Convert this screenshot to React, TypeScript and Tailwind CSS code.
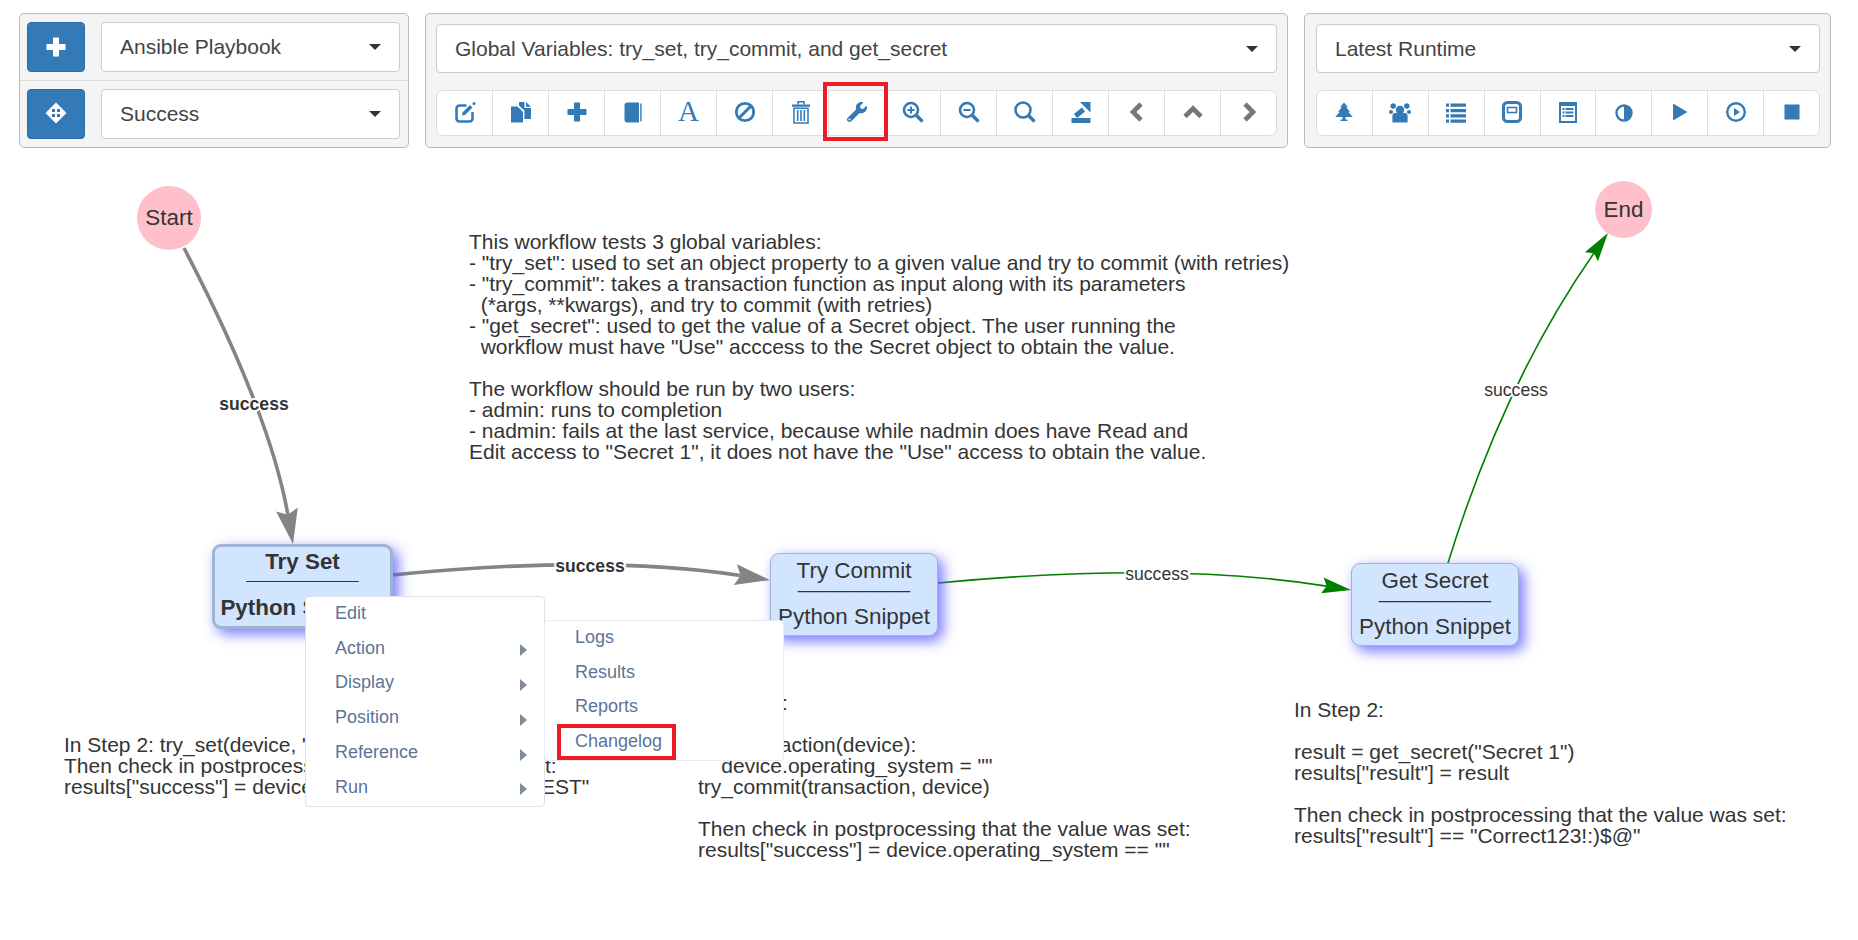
import React from 'react';
import { FaWrench } from 'react-icons/fa';

type Pt = [number, number];

// glyphs drawn by hand, the toolbar font is not available
const Svg: React.FC<{ children: React.ReactNode }> = ({ children }) => (
  <svg width="24" height="24" viewBox="0 0 24 24" fill="currentColor">{children}</svg>
);

const PlusGlyph = () => <Svg><path d="M9 2.5h6V9h6.5v6H15v6.5H9V15H2.5V9H9z" /></Svg>;
const MoveGlyph = () => (
  <Svg>
    <path d="M12 1.5 22.5 12 12 22.5 1.5 12z" />
    <path d="M8 8h3v3H8zM13 8h3v3h-3zM8 13h3v3H8zM13 13h3v3h-3z" fill="#337ab7" />
  </Svg>
);
const EditGlyph = () => (
  <Svg>
    <path d="M13.5 5.5H6.5a3 3 0 0 0-3 3v10a3 3 0 0 0 3 3h10a3 3 0 0 0 3-3v-6.5" fill="none" stroke="currentColor" strokeWidth="2.6" />
    <path d="M9.5 12.5 17 5l2.5 2.5-7.5 7.5-3 .6z" />
    <circle cx="21" cy="3.6" r="1.5" />
  </Svg>
);
const DuplicateGlyph = () => (
  <Svg>
    <path d="M2 6.5h6.5L14 12v10.5H2z" />
    <path d="M10 2h5.5v6H22v11h-6.6v-8.5L10 5.5z" />
    <path d="M17 2l5 4.8h-5z" />
  </Svg>
);
const BookGlyph = () => (
  <Svg>
    <path d="M3.5 5.5c0-2 1-3 3-3h11.5v17.5H3.5z" />
    <path d="M3.5 19.5h14.5v3H6c-1.5 0-2.5-1-2.5-3z" />
    <path d="M19.2 3.5h1.4v18h-1.4z" />
  </Svg>
);
const BanGlyph = () => (
  <Svg>
    <circle cx="12" cy="12" r="8.7" fill="none" stroke="currentColor" strokeWidth="2.8" />
    <path d="M6.5 17.5 17.5 6.5" stroke="currentColor" strokeWidth="3" />
  </Svg>
);
const TrashGlyph = () => (
  <Svg>
    <path d="M3 4.5h18v2.2H3z" />
    <path d="M9 4.5V1.8h6v2.7" fill="none" stroke="currentColor" strokeWidth="1.5" />
    <path d="M5 8.2h14V23H5z" fill="none" stroke="currentColor" strokeWidth="1.5" />
    <path d="M8.7 10v11M12 10v11M15.3 10v11" stroke="currentColor" strokeWidth="1.6" />
  </Svg>
);
const Lens: React.FC<{ r?: number; children?: React.ReactNode }> = ({ r = 7, children }) => (
  <Svg>
    <circle cx="10" cy="10" r={r} fill="none" stroke="currentColor" strokeWidth="2.6" />
    <path d="M15.5 15.5 21.5 21.5" stroke="currentColor" strokeWidth="3.4" />
    {children}
  </Svg>
);
const ImportGlyph = () => (
  <Svg>
    <path d="M2.5 18h19v5h-19z" />
    <path d="M11 2h10.5v10.5z" />
    <path d="M14.5 9.5 6.5 16" stroke="currentColor" strokeWidth="5" />
  </Svg>
);
const Chevron: React.FC<{ d: string }> = ({ d }) => (
  <Svg><path d={d} fill="none" stroke="currentColor" strokeWidth="4.6" /></Svg>
);
const TreeGlyph = () => (
  <Svg><path d="M12 2.5l4 4.7h-1.8l3.8 4.6h-1.8l4.5 5.2h-7.2v2.6h2v1.4H8.5V19.6h2V17H3.3l4.5-5.2H6l3.8-4.6H8z" /></Svg>
);
const GroupGlyph = () => (
  <Svg>
    <circle cx="5.2" cy="6" r="2.7" />
    <circle cx="18.8" cy="6" r="2.7" />
    <circle cx="3" cy="12" r="2.1" />
    <circle cx="21" cy="12" r="2.1" />
    <circle cx="12" cy="10" r="4.2" />
    <path d="M4.4 22v-5.5a3 3 0 0 1 3-3h9.2a3 3 0 0 1 3 3V22a1 1 0 0 1-1 1H5.4a1 1 0 0 1-1-1z" transform="translate(0 -.5)" />
  </Svg>
);
const ListGlyph = () => (
  <Svg>
    <path d="M2 3.5h3v3.2H2zM2 9h3v3.2H2zM2 14.2h3v3.2H2zM2 19.5h3v3.2H2z" />
    <path d="M6.5 3.5H22v3.2H6.5zM6.5 9H22v3.2H6.5zM6.5 14.2H22v3.2H6.5zM6.5 19.5H22v3.2H6.5z" />
  </Svg>
);
const ModalGlyph = () => (
  <Svg>
    <rect x="3.5" y="2.5" width="17" height="19" rx="4" fill="none" stroke="currentColor" strokeWidth="3" />
    <rect x="7.5" y="7.5" width="9" height="5" fill="none" stroke="currentColor" strokeWidth="1.5" />
  </Svg>
);
const ListAltGlyph = () => (
  <Svg>
    <path fillRule="evenodd" d="M3 2h18v21H3zM5 6v15h14V6z" />
    <path d="M6.5 8h2v2h-2zM6.5 11.5h2v2h-2zM6.5 15h2v2h-2zM9.5 8h8v2h-8zM9.5 11.5h8v2h-8zM9.5 15h8v2h-8z" />
  </Svg>
);
const AdjustGlyph = () => (
  <Svg>
    <circle cx="12" cy="13" r="7.5" fill="none" stroke="currentColor" strokeWidth="2.4" />
    <path d="M12 5.5a7.5 7.5 0 0 1 0 15z" />
  </Svg>
);
const PlayCircleGlyph = () => (
  <Svg>
    <circle cx="12" cy="12" r="8.8" fill="none" stroke="currentColor" strokeWidth="2.4" />
    <path d="M10 8l6 4-6 4z" />
  </Svg>
);

const BLUE = 'text-[#337ab7]';
const GRAY = 'text-[#777777]';

const editIcons: [React.ReactNode, string][] = [
  [<EditGlyph />, BLUE],
  [<DuplicateGlyph />, BLUE],
  [<PlusGlyph />, BLUE],
  [<BookGlyph />, BLUE],
  [<span className="font-['Liberation_Serif',serif] text-[29px] leading-none">A</span>, BLUE],
  [<BanGlyph />, BLUE],
  [<TrashGlyph />, BLUE],
  [<FaWrench size={20} />, BLUE],
  [<Lens><path d="M9 6.5h2V9h2.5v2H11v2.5H9V11H6.5V9H9z" /></Lens>, BLUE],
  [<Lens><path d="M6.5 9h7v2h-7z" /></Lens>, BLUE],
  [<Lens r={7.5} />, BLUE],
  [<ImportGlyph />, BLUE],
  [<Chevron d="M16 4 8 12l8 8" />, GRAY],
  [<Chevron d="M4 16.5l8-8 8 8" />, GRAY],
  [<Chevron d="M8 4l8 8-8 8" />, GRAY],
];

const runtimeIcons: React.ReactNode[] = [
  <TreeGlyph />,
  <GroupGlyph />,
  <ListGlyph />,
  <ModalGlyph />,
  <ListAltGlyph />,
  <AdjustGlyph />,
  <Svg><path d="M5 3.5 19.5 12 5 20.5z" /></Svg>,
  <PlayCircleGlyph />,
  <Svg><path d="M4.5 4.5h15v15h-15z" /></Svg>,
];

const Select: React.FC<{ label: string; className: string }> = ({ label, className }) => (
  <div className={`flex items-center justify-between bg-white border border-[#cccccc] rounded-[4px] pl-[18px] pr-[18px] text-[21px] text-[#444444] ${className}`}>
    <span>{label}</span>
    <span className="w-0 h-0 border-x-[6px] border-x-transparent border-t-[6px] border-t-[#333333]" />
  </div>
);

const IconBar: React.FC<{ items: [React.ReactNode, string][] }> = ({ items }) => (
  <div className="flex h-[46px] bg-white border border-[#dddddd] rounded-[7px] overflow-hidden">
    {items.map(([icon, color], i) => (
      <div key={i} className={`flex-1 flex items-center justify-center pb-[3px] ${color} ${i < items.length - 1 ? 'border-r border-[#dddddd]' : ''}`}>
        {icon}
      </div>
    ))}
  </div>
);

const Edge: React.FC<{ from: Pt; ctrl: Pt; to: Pt; color: string; width: number; len: number; wide: number }> = ({ from, ctrl, to, color, width, len, wide }) => {
  const dx = to[0] - ctrl[0];
  const dy = to[1] - ctrl[1];
  const d = Math.hypot(dx, dy);
  const ux = dx / d;
  const uy = dy / d;
  const bx = to[0] - ux * len;
  const by = to[1] - uy * len;
  const nx = to[0] - ux * len * 0.85;
  const ny = to[1] - uy * len * 0.85;
  const head = [
    to,
    [bx - uy * wide, by + ux * wide],
    [nx, ny],
    [bx + uy * wide, by - ux * wide],
  ].map(p => p.join(',')).join(' ');
  return (
    <g>
      <path d={`M${from[0]} ${from[1]} Q${ctrl[0]} ${ctrl[1]} ${nx} ${ny}`} fill="none" stroke={color} strokeWidth={width} />
      <polygon points={head} fill={color} />
    </g>
  );
};

// vis draws edge labels with a white outline, not a filled box
const EdgeLabel: React.FC<{ className: string; bold?: boolean }> = ({ className, bold }) => (
  <span className={`absolute -translate-x-1/2 -translate-y-1/2 text-[17.6px] leading-[18px] text-[#343434] [-webkit-text-stroke:4px_white] [paint-order:stroke_fill] ${bold ? 'font-bold' : ''} ${className}`}>
    success
  </span>
);

const Node: React.FC<{ title: string; className: string; selected?: boolean }> = ({ title, className, selected }) => (
  <div className={`absolute flex flex-col items-center justify-center bg-[#d2e5ff] rounded-[9px] text-[22.4px] text-[#343434] shadow-[5px_5px_14px_rgba(85,85,255,0.8)] ${selected ? 'border-[3px] border-[#9db4d6] font-bold pb-[3px]' : 'border-[1.5px] border-[#9db4d6] pb-[2px]'} ${className}`}>
    <div className="leading-[22px]">{title}</div>
    <div className="leading-[0px] -mt-px h-[25px]">_________</div>
    <div className="leading-[22px] whitespace-nowrap">Python Snippet</div>
  </div>
);

const Circle: React.FC<{ label: string; className: string }> = ({ label, className }) => (
  <div className={`absolute flex items-center justify-center rounded-full bg-[#ffc0cb] text-[22.4px] text-[#343434] ${className}`}>{label}</div>
);

const Note: React.FC<{ text: string; className: string }> = ({ text, className }) => (
  <pre className={`absolute font-['Liberation_Sans',Arial,sans-serif] text-[21px] leading-[21px] text-[#343434] ${className}`}>{text}</pre>
);

const MenuItem: React.FC<{ label: string; pad: string; arrow?: boolean }> = ({ label, pad, arrow }) => (
  <div className={`flex items-center justify-between h-[34.8px] pb-[2px] text-[18px] text-[#5b7497] ${pad} pr-[17px]`}>
    <span>{label}</span>
    {arrow && <span className="w-0 h-0 mt-[4px] border-y-[6.5px] border-y-transparent border-l-[7px] border-l-[#7f8c9b]" />}
  </div>
);

const intro = `This workflow tests 3 global variables:
- "try_set": used to set an object property to a given value and try to commit (with retries)
- "try_commit": takes a transaction function as input along with its parameters
  (*args, **kwargs), and try to commit (with retries)
- "get_secret": used to get the value of a Secret object. The user running the
  workflow must have "Use" acccess to the Secret object to obtain the value.

The workflow should be run by two users:
- admin: runs to completion
- nadmin: fails at the last service, because while nadmin does have Read and
Edit access to "Secret 1", it does not have the "Use" access to obtain the value.`;

const stepOne = `In Step 2: try_set(device, "operating_system", "TEST")
Then check in postprocessing that the value was set:
results["success"] = device.operating_system == "TEST"`;

const stepTwo = `In Step 2:

def transaction(device):
    device.operating_system = ""
try_commit(transaction, device)

Then check in postprocessing that the value was set:
results["success"] = device.operating_system == ""`;

const stepThree = `In Step 2:

result = get_secret("Secret 1")
results["result"] = result

Then check in postprocessing that the value was set:
results["result"] == "Correct123!:)$@"`;

export default function App() {
  return (
    <div className="relative w-[1858px] h-[940px] overflow-hidden bg-white font-['Liberation_Sans',Arial,sans-serif]">
      {/* Toolbars */}
      <div className="relative flex gap-4 pl-[19px] pt-[13px]">
        <div className="w-[390px] h-[135px] flex flex-col bg-[#f4f4f4] border border-[#b9b9b9] rounded-[5px]">
          <div className="flex items-center gap-4 h-[67px] pl-[7px] pr-2 border-b border-[#dddddd]">
            <div className="flex items-center justify-center w-[58px] h-[50px] bg-[#337ab7] border border-[#2e6da4] rounded-[4px] text-white"><PlusGlyph /></div>
            <Select label="Ansible Playbook" className="flex-1 h-[50px]" />
          </div>
          <div className="flex items-center gap-4 h-[66px] pl-[7px] pr-2">
            <div className="flex items-center justify-center w-[58px] h-[50px] pb-[3px] bg-[#337ab7] border border-[#2e6da4] rounded-[4px] text-white"><MoveGlyph /></div>
            <Select label="Success" className="flex-1 h-[50px]" />
          </div>
        </div>

        <div className="w-[863px] h-[135px] flex flex-col gap-[17px] pt-[10px] px-[10px] bg-[#f4f4f4] border border-[#b9b9b9] rounded-[5px]">
          <Select label="Global Variables: try_set, try_commit, and get_secret" className="h-[49px]" />
          <IconBar items={editIcons} />
        </div>

        <div className="w-[527px] h-[135px] flex flex-col gap-[17px] pt-[10px] pl-[11px] pr-[10px] bg-[#f4f4f4] border border-[#b9b9b9] rounded-[5px]">
          <Select label="Latest Runtime" className="h-[49px]" />
          <IconBar items={runtimeIcons.map(icon => [icon, BLUE] as [React.ReactNode, string])} />
        </div>
      </div>

      {/* Workflow canvas */}
      <svg className="absolute left-0 top-0" width="1858" height="940">
        <Edge from={[184, 248]} ctrl={[270, 413]} to={[293, 544]} color="#848484" width={3.6} len={35} wide={11} />
        <Edge from={[392, 575]} ctrl={[599, 554]} to={[770, 580]} color="#848484" width={3.6} len={35} wide={10.5} />
        <Edge from={[938, 583]} ctrl={[1169, 561]} to={[1351, 590]} color="#008000" width={1.6} len={29} wide={8} />
        <Edge from={[1448, 563]} ctrl={[1504, 382]} to={[1608, 233]} color="#008000" width={1.6} len={29} wide={8} />
      </svg>

      <EdgeLabel bold className="left-[254px] top-[404px]" />
      <EdgeLabel bold className="left-[590px] top-[566px]" />
      <EdgeLabel className="left-[1157px] top-[574px]" />
      <EdgeLabel className="left-[1516px] top-[390px]" />

      <Circle label="Start" className="left-[137px] top-[186px] w-[64px] h-[64px]" />
      <Circle label="End" className="left-[1595px] top-[181px] w-[57px] h-[57px]" />

      <Node title="Try Set" selected className="left-[212px] top-[544px] w-[181px] h-[85px]" />
      <Node title="Try Commit" className="left-[770px] top-[553px] w-[168px] h-[83px]" />
      <Node title="Get Secret" className="left-[1351px] top-[563px] w-[168px] h-[83px]" />

      <Note text={intro} className="left-[469px] top-[231px]" />
      <Note text={stepOne} className="left-[64px] top-[734px]" />
      <Note text={stepTwo} className="left-[698px] top-[692px]" />
      <Note text={stepThree} className="left-[1294px] top-[699px]" />

      {/* Context menu */}
      <div className="absolute left-[305px] top-[596px] w-[240px] bg-white border border-[#dde2ea] rounded-[4px] z-10">
        <MenuItem label="Edit" pad="pl-[29px]" />
        <MenuItem label="Action" pad="pl-[29px]" arrow />
        <MenuItem label="Display" pad="pl-[29px]" arrow />
        <MenuItem label="Position" pad="pl-[29px]" arrow />
        <MenuItem label="Reference" pad="pl-[29px]" arrow />
        <MenuItem label="Run" pad="pl-[29px]" arrow />
      </div>
      <div className="absolute left-[544px] top-[620px] w-[240px] bg-white border border-[#e8ebf0] rounded-[4px] z-10">
        <MenuItem label="Logs" pad="pl-[30px]" />
        <MenuItem label="Results" pad="pl-[30px]" />
        <MenuItem label="Reports" pad="pl-[30px]" />
        <MenuItem label="Changelog" pad="pl-[30px]" />
      </div>

      {/* Red highlight boxes */}
      <div className="absolute left-[823px] top-[82px] w-[65px] h-[59px] border-4 border-[#ed1c24] z-20" />
      <div className="absolute left-[557px] top-[724px] w-[119px] h-[36px] border-4 border-[#ed1c24] z-20" />
    </div>
  );
}
